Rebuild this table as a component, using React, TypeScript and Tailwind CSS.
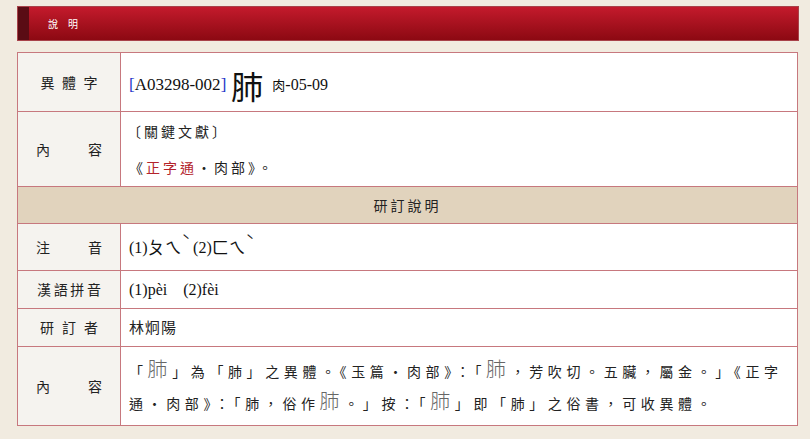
import { ReactNode } from 'react';

const cjk = "font-['Noto_Sans_CJK_TC',sans-serif]";
const serif = "font-['Liberation_Serif','Noto_Sans_CJK_TC',serif]";

function Label({ chars, width }: { chars: string[]; width: string }) {
  return (
    <div className="w-[103px] shrink-0 border-r border-[#c7787e] bg-[#f5f3ef] flex items-center justify-center">
      <div className={`flex justify-between ${width} text-[14px] text-[#222] ${cjk}`}>
        {chars.map((c, i) => (
          <span key={i}>{c}</span>
        ))}
      </div>
    </div>
  );
}

function Row({
  label,
  width,
  height,
  last = false,
  children
}: {
  label: string[];
  width: string;
  height: string;
  last?: boolean;
  children: ReactNode;
}) {
  return (
    <div className={`flex ${height} ${last ? '' : 'border-b border-[#c7787e]'}`}>
      <Label chars={label} width={width} />
      <div className="flex-1 bg-white pl-[8px] flex flex-col justify-center">{children}</div>
    </div>
  );
}

function Variant() {
  return <span className="text-[20px] text-[#666] font-light">肺</span>;
}

export default function App() {
  return (
    <div className="w-[810px] h-[439px] bg-[#f1ebe0] pt-[6px] overflow-hidden">
      <div className="ml-[17px] w-[782px] h-[35px] flex bg-gradient-to-b from-[#c41a2c] to-[#8c0912] border border-[#a8424a]">
        <div className="w-[11px] bg-[#5a0c14]" />
        <div className={`pl-[19px] flex items-center gap-[10px] text-[10px] text-white ${cjk}`}>
          <span>說</span>
          <span>明</span>
        </div>
      </div>

      <div className="ml-[17px] mt-[11px] w-[781px] border border-[#c7787e] flex flex-col">
        <Row label={['異', '體', '字']} width="w-[57px]" height="h-[59px]">
          <div className={`flex items-center pt-[6px] text-[17px] text-[#111] ${serif}`}>
            <span>
              <span className="text-[#2636c8]">[</span>A03298-002<span className="text-[#2636c8]">]</span>
            </span>
            <span className={`ml-[5px] text-[32px] leading-none font-normal ${cjk}`}>肺</span>
            <span className="ml-[9px] text-[16px]">
              <span className={`text-[13px] ${cjk}`}>肉</span>-05-09
            </span>
          </div>
        </Row>

        <Row label={['內', '容']} width="w-[66px]" height="h-[75px]">
          <div className={`text-[14px] tracking-[3px] text-[#222] leading-[20px] ${cjk}`}>
            <div className="-ml-[2px]">〔關鍵文獻〕</div>
            <div className="mt-[16px]">
              《<span className="text-[#b3232b]">正字通</span>・肉部》。
            </div>
          </div>
        </Row>

        <div className="h-[37px] border-b border-[#c7787e] bg-[#e1d3bd] flex items-center justify-center">
          <span className={`text-[14px] tracking-[3px] text-[#222] ${cjk}`}>研訂說明</span>
        </div>

        <Row label={['注', '音']} width="w-[66px]" height="h-[47px]">
          <div className={`flex items-end text-[16px] text-[#111] ${serif}`}>
            <span>(1)</span>
            <span className={`text-[17px] ${cjk}`}>ㄆㄟ</span>
            <span className={`text-[14px] self-start -mt-[4px] ${cjk}`}>ˋ</span>
            <span className="ml-[3px]">(2)</span>
            <span className={`text-[17px] ${cjk}`}>ㄈㄟ</span>
            <span className={`text-[14px] self-start -mt-[4px] ${cjk}`}>ˋ</span>
          </div>
        </Row>

        <Row label={['漢', '語', '拼', '音']} width="w-[64px]" height="h-[38px]">
          <div className={`text-[16px] text-[#111] whitespace-pre ${serif}`}>(1)pèi    (2)fèi</div>
        </Row>

        <Row label={['研', '訂', '者']} width="w-[58px]" height="h-[38px]">
          <div className={`text-[15px] tracking-[1px] text-[#222] ${cjk}`}>林炯陽</div>
        </Row>

        <Row label={['內', '容']} width="w-[66px]" height="h-[78px]" last>
          <div className={`text-[14px] tracking-[4.6px] leading-[29px] text-[#222] whitespace-nowrap ${cjk}`}>
            <div>
              「<Variant />」為「肺」之異體。《玉篇・肉部》：「<Variant />，芳吹切。五臟，屬金。」《正字
            </div>
            <div>
              通・肉部》：「肺，俗作<Variant />。」按：「<Variant />」即「肺」之俗書，可收異體。
            </div>
          </div>
        </Row>
      </div>
    </div>
  );
}
